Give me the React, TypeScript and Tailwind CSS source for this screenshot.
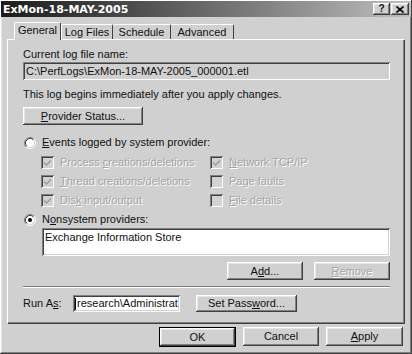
import React from "react";

const raised =
    "shadow-[inset_-1px_-1px_#404040,inset_1px_1px_#ffffff,inset_-2px_-2px_#808080,inset_2px_2px_#e6e6e6]";
const sunken =
    "shadow-[inset_1px_1px_#808080,inset_-1px_-1px_#ffffff,inset_2px_2px_#404040,inset_-2px_-2px_#d2d2d2]";
const dim = "text-[#a4a4a4] [text-shadow:1px_1px_0_#ffffff]";

const Btn: React.FC<{ w: string; children: React.ReactNode; def?: boolean; off?: boolean; h?: string }> = ({
    w,
    children,
    def,
    off,
    h = "h-[18px]",
}) => (
    <div className={`${w} ${h} ${def ? "border border-black" : ""}`}>
        <div className={`h-full w-full flex items-center justify-center ${raised} ${off ? dim : ""}`}>
            <span>{children}</span>
        </div>
    </div>
);

const Radio: React.FC<{ on?: boolean }> = ({ on }) => (
    <svg width="12" height="12" viewBox="0 0 12 12" className="shrink-0">
        <circle cx="6" cy="6" r="4.5" fill="#ffffff" />
        <path d="M2.11 9.89 A5.5 5.5 0 0 1 9.89 2.11" stroke="#808080" fill="none" />
        <path d="M9.89 2.11 A5.5 5.5 0 0 1 2.11 9.89" stroke="#ffffff" fill="none" />
        <path d="M2.82 9.18 A4.5 4.5 0 0 1 9.18 2.82" stroke="#404040" fill="none" />
        <path d="M9.18 2.82 A4.5 4.5 0 0 1 2.82 9.18" stroke="#d2d2d2" fill="none" />
        {on && <circle cx="6" cy="6" r="2" fill="#000000" />}
    </svg>
);

const Check: React.FC<{ on?: boolean; label: React.ReactNode }> = ({ on, label }) => (
    <div className="flex items-center h-[13px]">
        <div className={`w-[13px] h-[13px] shrink-0 bg-[#d2d2d2] ${sunken} flex items-center justify-center`}>
            {on && (
                <svg width="9" height="9" viewBox="0 0 9 9">
                    <path d="M1 3.5 L3.5 6 L8 1.5 L8 3.5 L3.5 8 L1 5.5 Z" fill="#9a9a9a" />
                </svg>
            )}
        </div>
        <span className={`ml-[6px] ${dim}`}>{label}</span>
    </div>
);

export default function App() {
    return (
        <div
            className={`w-[412px] h-[354px] bg-[#d0d0d0] text-[11px] leading-[13px] text-[#111111] ${raised} p-[1px] flex flex-col`}
            style={{ fontFamily: '"Liberation Sans", Arial, sans-serif' }}
        >
            {/* title bar */}
            <div className="h-[16px] flex items-center bg-gradient-to-r from-[#1c1c1c] via-[#6a6a6a] to-[#c0c0c0] pl-[2px] pr-[2px]">
                <span
                    className="text-white font-bold text-[11px]"
                    style={{ fontFamily: '"DejaVu Sans", Verdana, sans-serif' }}
                >
                    ExMon-18-MAY-2005
                </span>
                <div className="ml-auto flex gap-[1px]">
                    <div className={`w-[17px] h-[12px] bg-[#d0d0d0] ${raised} flex items-center justify-center text-[10px] font-bold leading-none`}>
                        ?
                    </div>
                    <div className={`w-[18px] h-[12px] bg-[#d0d0d0] ${raised} flex items-center justify-center`}>
                        <svg width="8" height="7" viewBox="0 0 8 7">
                            <path d="M0.5 0.5 L7.5 6.5 M7.5 0.5 L0.5 6.5" stroke="#000" strokeWidth="1.6" />
                        </svg>
                    </div>
                </div>
            </div>

            <div className="pl-[6px] pr-[7px]">
                {/* tabs */}
                <div className="mt-[5px] h-[17px] flex items-end pl-[7px]">
                    <div className="relative z-10 -mb-px w-[47px] h-[18px] bg-[#d0d0d0] border-l border-t border-white border-r border-r-[#404040] rounded-t-[2px] flex items-center justify-center pb-[2px]">
                        General
                    </div>
                    <div className="w-[52px] h-[15px] border-l border-t border-white border-r border-r-[#404040] rounded-t-[2px] flex items-center justify-center">
                        Log Files
                    </div>
                    <div className="w-[58px] h-[15px] border-t border-white border-r border-r-[#404040] rounded-t-[2px] flex items-center justify-center">
                        Schedule
                    </div>
                    <div className="w-[63px] h-[15px] border-t border-white border-r border-r-[#404040] rounded-t-[2px] flex items-center justify-center">
                        Advanced
                    </div>
                </div>

                {/* panel */}
                <div className="h-[284px] border-l border-t border-white shadow-[inset_-1px_-1px_#808080,1px_1px_#404040] pl-[15px] pr-[14px] pt-[8px] flex flex-col">
                    <div>Current log file name:</div>
                    <div className={`mt-[1px] h-[18px] ${sunken} flex items-center pl-[3px]`}>
                        {"C:\\PerfLogs\\ExMon-18-MAY-2005_000001.etl"}
                    </div>
                    <div className="mt-[8px]">This log begins immediately after you apply changes.</div>
                    <div className="mt-[6px]">
                        <Btn w="w-[120px]">
                            <span className="underline">P</span>rovider Status...
                        </Btn>
                    </div>

                    <div className="mt-[11px] flex items-center h-[13px] pl-[1px]">
                        <Radio />
                        <span className="ml-[6px]">
                            <span className="underline">E</span>vents logged by system provider:
                        </span>
                    </div>

                    <div className="mt-[7px] pl-[18px] grid grid-cols-[169px_1fr] gap-y-[6px]">
                        <Check on label={<>Process <span className="underline">c</span>reations/deletions</>} />
                        <Check on label={<><span className="underline">N</span>etwork TCP/IP</>} />
                        <Check on label={<><span className="underline">T</span>hread creations/deletions</>} />
                        <Check label="Page faults" />
                        <Check on label={<>Dis<span className="underline">k</span> input/output</>} />
                        <Check label={<><span className="underline">F</span>ile details</>} />
                    </div>

                    <div className="mt-[6px] flex items-center h-[13px] pl-[1px]">
                        <Radio on />
                        <span className="ml-[6px]">
                            N<span className="underline">o</span>nsystem providers:
                        </span>
                    </div>
                    <div className={`mt-[2px] ml-[19px] h-[28px] bg-white ${sunken} pl-[3px] pt-[3px]`}>
                        Exchange Information Store
                    </div>

                    <div className="mt-[6px] flex justify-end gap-[11px]">
                        <Btn w="w-[76px]">
                            A<span className="underline">d</span>d...
                        </Btn>
                        <Btn w="w-[76px]" off>
                            <span className="underline">R</span>emove
                        </Btn>
                    </div>

                    <div className="mt-[6px] h-[2px] border-t border-[#808080] border-b border-b-white" />

                    <div className="mt-[7px] flex items-center">
                        <span className="w-[50px]">
                            Run A<span className="underline">s</span>:
                        </span>
                        <div className={`w-[107px] h-[17px] bg-white ${sunken} flex items-center pl-[2px] overflow-hidden whitespace-nowrap`}>
                            <span className="w-px h-[12px] bg-black mr-px" />
                            {"research\\Administrat"}
                        </div>
                        <div className="ml-[16px]">
                            <Btn w="w-[101px]" h="h-[17px]">
                                Set Pass<span className="underline">w</span>ord...
                            </Btn>
                        </div>
                    </div>
                </div>
            </div>

            {/* dialog buttons */}
            <div className="mt-[4px] flex justify-end gap-[7px] pr-[8px]">
                <Btn w="w-[77px]" h="h-[20px]" def>
                    OK
                </Btn>
                <Btn w="w-[76px]" h="h-[19px]">
                    Cancel
                </Btn>
                <Btn w="w-[77px]" h="h-[19px]">
                    <span className="underline">A</span>pply
                </Btn>
            </div>
        </div>
    );
}
